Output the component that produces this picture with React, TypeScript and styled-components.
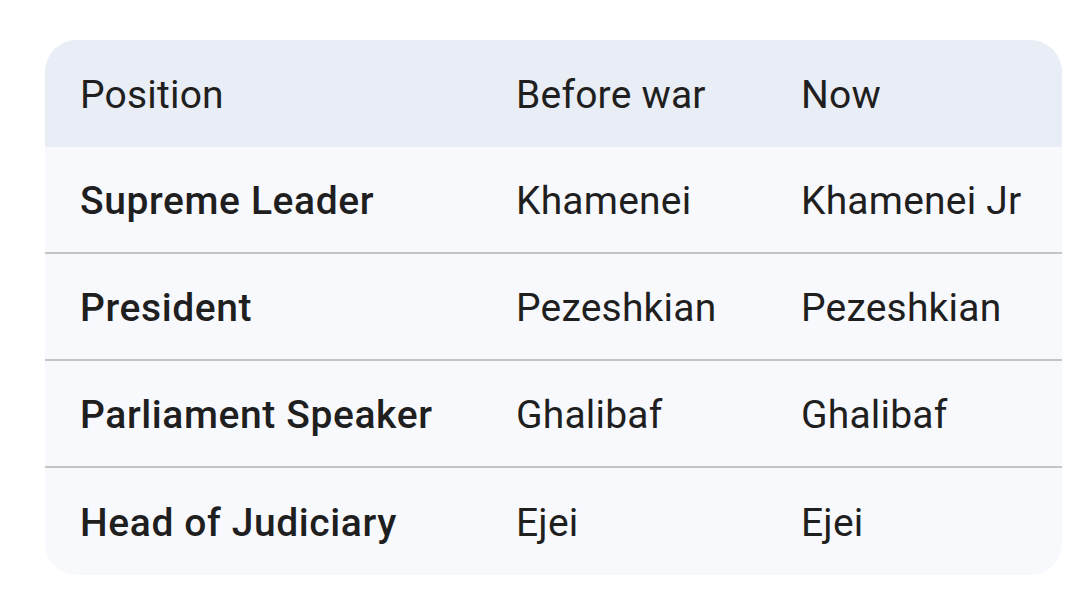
import React from 'react';
import styled, { createGlobalStyle } from 'styled-components';

const GlobalStyle = createGlobalStyle`
  html, body {
    margin: 0;
    padding: 0;
    background: #ffffff;
  }
  body {
    font-family: Roboto, 'Noto Sans', Arial, sans-serif;
    color: #1f1f1f;
  }
`;

const Page = styled.div`
  width: 1080px;
  height: 607px;
  box-sizing: border-box;
  padding: 40px 0 0 45px;
  overflow: hidden;
`;

const Card = styled.div`
  width: 1017px;
  border-radius: 32px;
  overflow: hidden;
  background: #f8f9fd;
`;

const Row = styled.div<{ header?: boolean; divider?: boolean }>`
  display: grid;
  grid-template-columns: 436px 285px 1fr;
  align-items: center;
  box-sizing: border-box;
  padding-left: 35px;
  height: 107px;
  background: ${({ header }) => (header ? '#e9edf5' : '#f8f9fd')};
  border-bottom: ${({ divider }) => (divider ? '2px solid #c4c5c7' : 'none')};
`;

const Cell = styled.div<{ strong?: boolean }>`
  font-size: 39px;
  font-weight: ${({ strong }) => (strong ? 500 : 400)};
  letter-spacing: ${({ strong }) => (strong ? '0.6px' : '0.2px')};
  white-space: nowrap;
  padding-top: ${({ strong }) => (strong ? '2px' : '2px')};
`;

const rows = [
  ['Supreme Leader', 'Khamenei', 'Khamenei Jr'],
  ['President', 'Pezeshkian', 'Pezeshkian'],
  ['Parliament Speaker', 'Ghalibaf', 'Ghalibaf'],
  ['Head of Judiciary', 'Ejei', 'Ejei'],
];

export default function App() {
  return (
    <>
      <GlobalStyle />
      <Page>
        <Card>
          <Row header>
            <Cell>Position</Cell>
            <Cell>Before war</Cell>
            <Cell>Now</Cell>
          </Row>
          {rows.map((r, i) => (
            <Row key={r[0]} divider={i < rows.length - 1}>
              <Cell strong>{r[0]}</Cell>
              <Cell>{r[1]}</Cell>
              <Cell>{r[2]}</Cell>
            </Row>
          ))}
        </Card>
      </Page>
    </>
  );
}
